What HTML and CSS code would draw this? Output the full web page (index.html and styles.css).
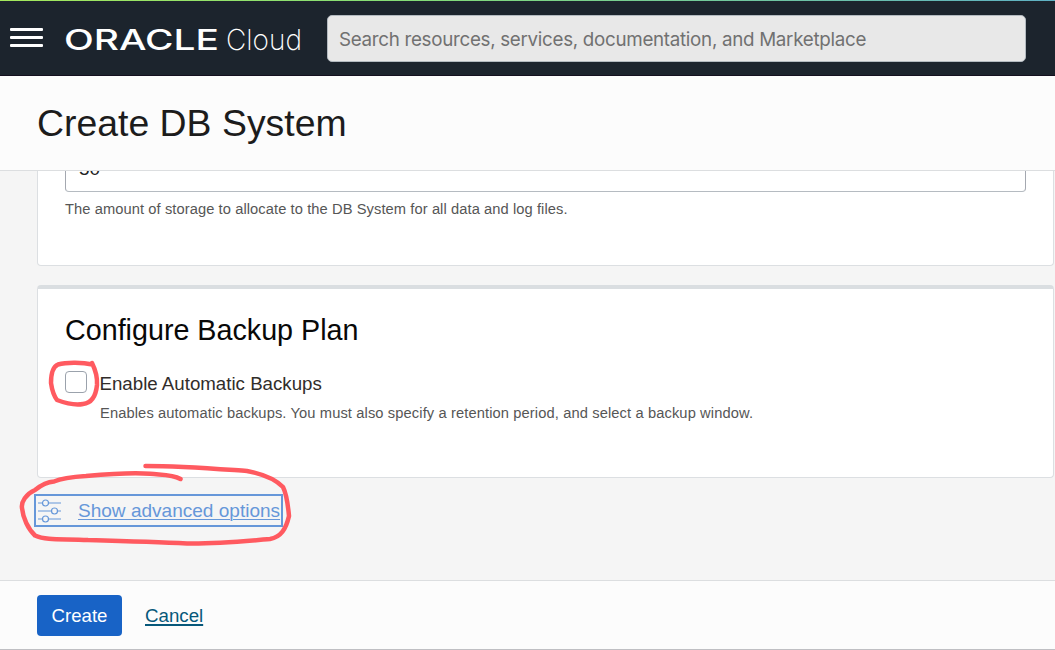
FILE: index.html
```html
<!DOCTYPE html>
<html lang="en">
<head>
<meta charset="utf-8">
<title>Create DB System</title>
<link rel="stylesheet" href="styles.css">
</head>
<body>
<div class="app">
  <header class="topbar">
    <button class="menu" aria-label="Menu"><span></span><span></span><span></span></button>
    <svg class="logo" width="244" height="36" viewBox="0 0 244 36">
      <text class="logo-brand" x="0" y="28" textLength="155" lengthAdjust="spacingAndGlyphs">ORACLE</text>
      <text class="logo-product" x="162" y="28" textLength="76" lengthAdjust="spacingAndGlyphs">Cloud</text>
    </svg>
    <input class="search" type="text" placeholder="Search resources, services, documentation, and Marketplace">
  </header>
  <div class="titlebar"><h1>Create DB System</h1></div>
  <main class="content">
    <section class="card storage">
      <div class="field">50</div>
      <p class="hint">The amount of storage to allocate to the DB System for all data and log files.</p>
    </section>
    <section class="card backup">
      <h2>Configure Backup Plan</h2>
      <div class="option">
        <span class="checkbox"></span>
        <div class="option-text">
          <div class="option-label">Enable Automatic Backups</div>
          <p class="hint">Enables automatic backups. You must also specify a retention period, and select a backup window.</p>
        </div>
      </div>
    </section>
    <a class="advanced">
      <svg class="sliders" width="24" height="24" viewBox="0 0 24 24">
        <path d="M0 4h4.500M10.500 4H23M0 12h13M19 12h4M0 20h4.500M10.500 20H23"/>
        <circle cx="7.500" cy="4" r="3"/><circle cx="16.500" cy="12" r="3"/><circle cx="7.500" cy="20" r="3"/>
      </svg>
      <span class="advanced-label">Show advanced options</span>
    </a>
  </main>
  <footer class="footer">
    <button class="create">Create</button>
    <a class="cancel">Cancel</a>
  </footer>
  <svg class="marks" width="1055" height="650" viewBox="0 0 1055 650">
    <path d="M92.500 364.500C83 362.500 67 362 58 364.500C52 367 51 376 51 383C52 390 54 396 57 400C65 403 75 405.500 83 404C92 403 96 395 97 385C97.500 377 95 369 92 363"/>
    <path d="M180.500 479C172 474 162 475 150 473.800C132 472 108 474 86 476C70 477 62 478 54 481.500C46 482 40 486 35 490C26 494 21 502 22 508C23 518 28 529 35 535.500C47 541 65 538.500 88 540C123 541 157 542 187 543.500C217 544 247 541 270 539C281 537 286 529 289 516C288 505 287 495 283 487C276 480 263 474 247 471C218 469 182 466 145.500 466"/>
  </svg>
</div>
</body>
</html>
```

FILE: styles.css
```css
* { box-sizing: border-box; }
body { margin: 0; font-family: "Liberation Sans", Arial, sans-serif; overflow: hidden; }
h1, h2, p { margin: 0; font-weight: 400; }
.app { position: relative; width: 1055px; height: 650px; display: flex; flex-direction: column; background: #f5f5f5; }
.topbar {
  flex: none; height: 76px; display: flex; align-items: flex-start; padding: 15px 0 0 10px;
  background: linear-gradient(90deg, #a4e85c, #84dc78 40%, #5fb1c4) top / 100% 1px no-repeat, #1c242d;
  border-bottom: 1px solid #14101f;
}
.menu { width: 33px; margin: 13px 22px 0 0; padding: 0; border: 0; background: none; display: flex; flex-direction: column; gap: 5.5px; }
.menu span { height: 2.5px; border-radius: 1px; background: #fff; }
.logo { flex: none; margin: 7px -4px 0 -1px; }
.logo text { fill: #fff; font-family: Inter, sans-serif; }
.logo-brand { font-size: 28px; font-weight: 500; }
.logo-product { font-size: 29px; font-weight: 200; }
.search {
  width: 699px; height: 47px; margin-left: 23px; padding: 2px 11px 0; border: 1px solid #b3bac0; border-radius: 5px;
  background: #e8e8e8; font: 18.8px Inter, sans-serif; letter-spacing: -0.3px;
}
.search::placeholder { color: #717171; opacity: 1; }
.titlebar { flex: none; height: 95px; padding: 25px 37px 0; background: #fcfcfc; border-bottom: 1px solid #dcdee0; }
h1 { font-size: 37.4px; line-height: 44px; color: #1c1c1c; }
.content { flex: 1; min-height: 0; overflow: hidden; padding-left: 37px; }
.card { width: 1017px; background: #fff; border: 1px solid #dcdfe2; border-radius: 4px; padding: 0 27px; }
.storage { height: 95px; border-top: 0; border-radius: 0 0 4px 4px; overflow: hidden; }
.field { height: 46px; margin-top: -25px; padding: 11px 13px; border: 1px solid #a4a8b0; border-bottom-color: #b5bbc1; border-radius: 4px; font-size: 19px; line-height: 22px; color: #222; }
.hint { font-size: 14.7px; line-height: 18px; letter-spacing: 0.11px; color: #565656; white-space: nowrap; }
.storage .hint { margin-top: 8px; letter-spacing: 0.08px; }
.backup { height: 193px; margin-top: 19px; border-top: 4px solid #dadee1; padding-top: 24px; }
h2 { font-size: 28.7px; line-height: 34px; color: #080808; }
.option { display: flex; gap: 13px; margin-top: 24px; }
.checkbox { width: 22px; height: 22px; border: 1px solid #9ba2ac; border-radius: 4px; }
.option-label { margin-left: -0.500px; font-size: 18.7px; line-height: 25px; color: #312d2a; }
.option-text .hint { margin-top: 8px; }
.advanced { display: flex; align-items: center; width: 249px; height: 33px; margin: 16px 0 0 -3px; padding-left: 2px; border: 2px solid #6697d9; color: #6697d9; }
.sliders { flex: none; fill: none; stroke: #6697d9; stroke-width: 1.2; margin-right: 16px; }
.advanced-label { font-size: 19.05px; white-space: nowrap; text-decoration: underline; text-decoration-thickness: 1px; text-underline-offset: 2px; }
.footer { flex: none; height: 70px; display: flex; align-items: flex-start; padding: 14px 37px 0; background: #fcfcfc; border-top: 1px solid #dcdee0; border-bottom: 1px solid #bfbfc3; }
.create { width: 85px; height: 41px; padding: 0; border: 0; border-radius: 4px; background: #1863c6; color: #fff; font: 18.6px "Liberation Sans", Arial, sans-serif; }
.cancel { margin: 10px 0 0 23px; font-size: 18.7px; line-height: 22px; color: #07587a; text-decoration: underline; text-decoration-thickness: 2px; text-underline-offset: 2px; }
.marks { position: absolute; left: 0; top: 0; pointer-events: none; fill: none; stroke: #ff5a60; stroke-width: 4.5; stroke-linecap: round; stroke-linejoin: round; }
```
